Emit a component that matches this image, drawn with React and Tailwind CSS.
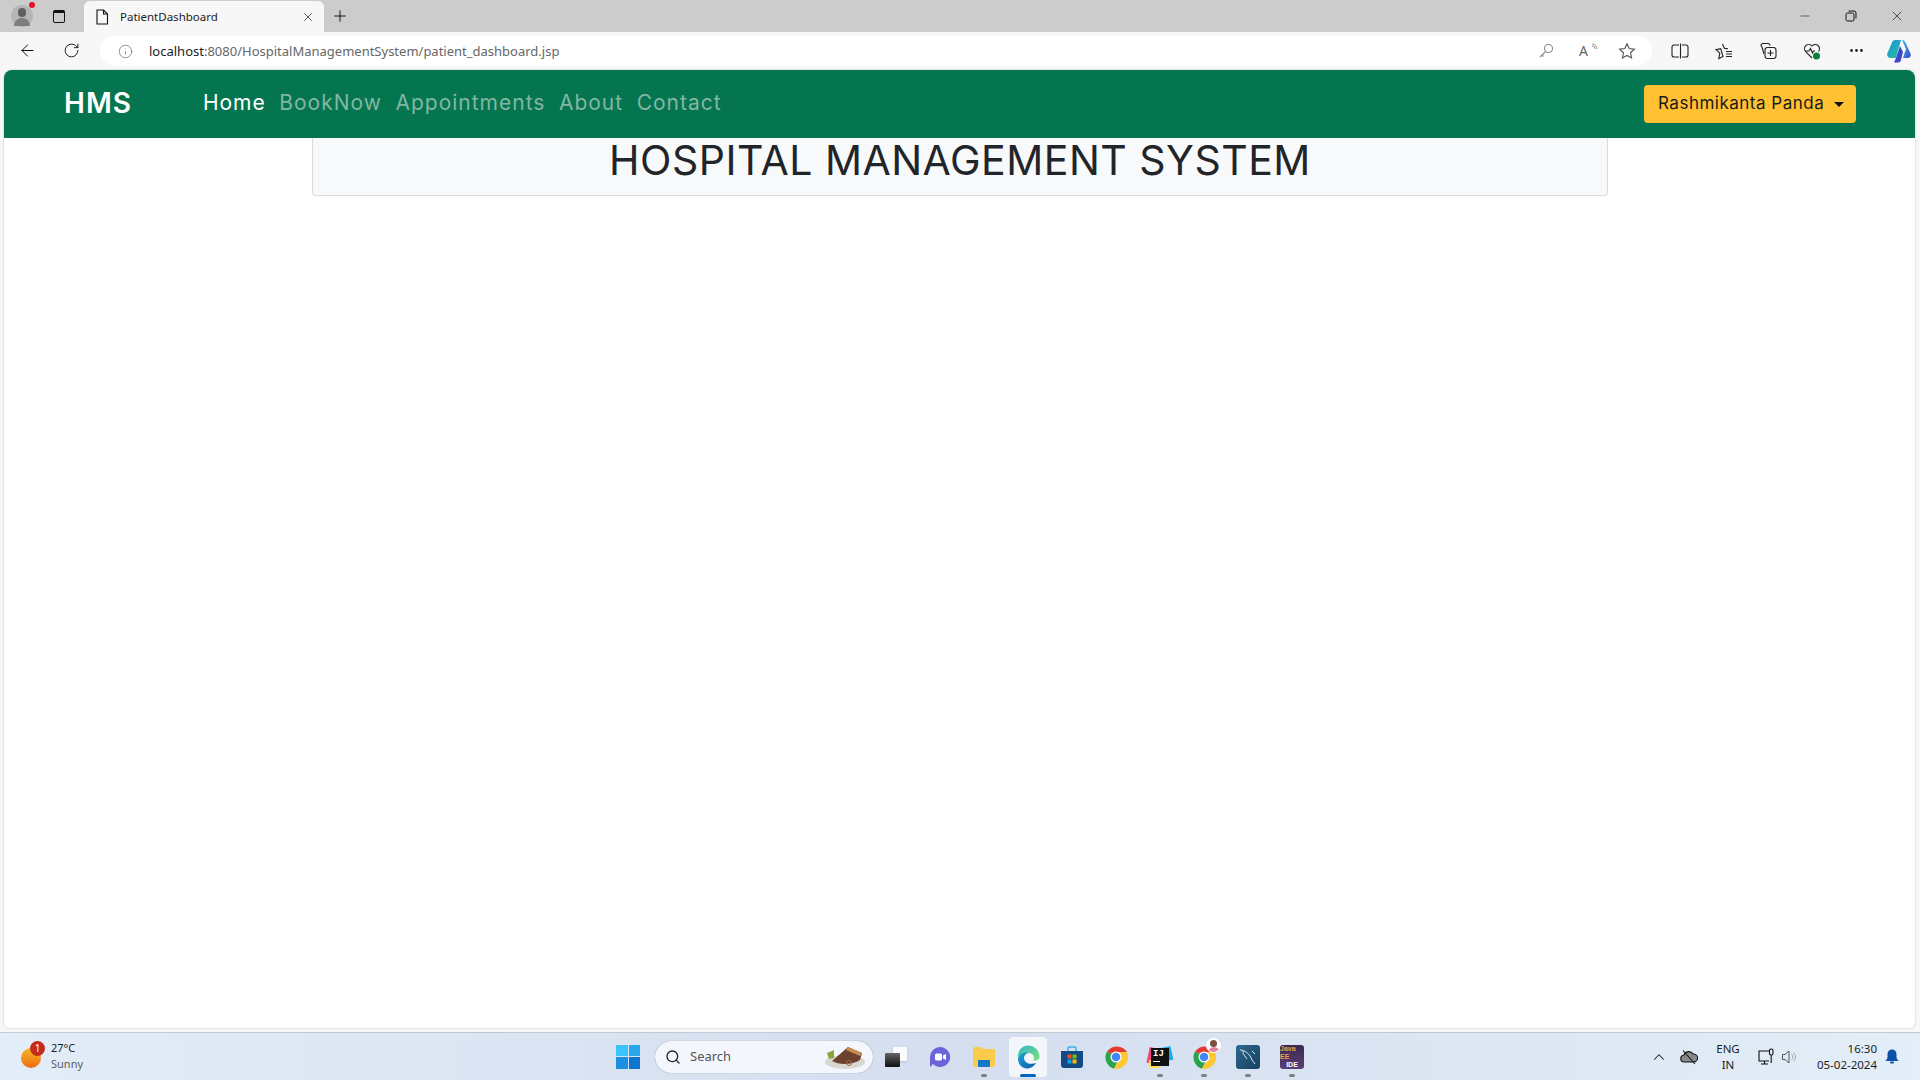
import { ArrowLeft, RotateCw, Info, Plus, X, Minus, Search, ChevronUp, MoreHorizontal } from 'lucide-react'

function ChromeLogo() {
  return (
    <svg width="24" height="24" viewBox="0 0 24 24">
      <path d="M12 12 L3 6.5 A12 12 0 0 1 23 7 L12 7 Z" fill="#e33b2e" />
      <path d="M12 12 L3 6.5 A12 12 0 0 0 10 23.8 L15 14 Z" fill="#2ba24c" />
      <path d="M12 7 L23 7 A12 12 0 0 1 10 23.8 L15 14 Z" fill="#fcc934" />
      <circle cx="12" cy="12" r="5.5" fill="white" />
      <circle cx="12" cy="12" r="4.3" fill="#4285f4" />
    </svg>
  )
}

function EdgeLogo() {
  return (
    <svg width="24" height="24" viewBox="0 0 24 24">
      <defs>
        <linearGradient id="edgeA" x1="0" y1="0" x2="1" y2="1">
          <stop offset="0" stopColor="#1fa2d8" />
          <stop offset="1" stopColor="#0b5ea8" />
        </linearGradient>
        <linearGradient id="edgeB" x1="0" y1="0" x2="1" y2="1">
          <stop offset="0" stopColor="#2fb8c8" />
          <stop offset="1" stopColor="#7fe07a" />
        </linearGradient>
      </defs>
      <path d="M12 0.5 A11.5 11.5 0 0 1 23.5 12 C23.5 15 20 16 17 15.5 C19 13 18 8 12 8 C7 8 4 11 2 14 C1 7 5 0.5 12 0.5 Z" fill="url(#edgeB)" />
      <path d="M2 14 C4 8 9 6.5 12.5 8 C8 9 7 13 9 16 C11 19 16 19.5 20 18 C17.5 22 14 23.5 11 23.5 C6 23.5 2 19 2 14 Z" fill="url(#edgeA)" />
    </svg>
  )
}

function Copilot() {
  return (
    <svg width="26" height="26" viewBox="0 0 26 26">
      <defs>
        <linearGradient id="copA" x1="0" y1="0" x2="1" y2="1">
          <stop offset="0" stopColor="#1c8fe0" />
          <stop offset="1" stopColor="#27c59a" />
        </linearGradient>
        <linearGradient id="copB" x1="0" y1="0" x2="1" y2="1">
          <stop offset="0" stopColor="#3fb4f2" />
          <stop offset="1" stopColor="#3d49c8" />
        </linearGradient>
      </defs>
      <path d="M9 2 H15 L10 20 H5 C2 20 0.5 17.5 1.5 15 L6 4.5 C6.6 3 7.6 2 9 2 Z" fill="url(#copA)" />
      <path d="M16 2 C18 2 19 3.4 19.6 5 L24.5 15.5 C25.6 18 24 20 21 20 H17 L20 11 Z" fill="url(#copB)" />
      <path d="M10 20 L14 8 L17 14 L15 22 C14.5 24 13 24.5 11.5 24.5 H8 Z" fill="#3d49c8" />
    </svg>
  )
}

function TaskIcon({ children, dot, active }) {
  return (
    <div className={`relative h-[40px] flex items-center justify-center rounded-[4px] ${active ? 'w-[38px] mx-[3px] bg-white/70' : 'w-[44px]'}`}>
      {children}
      {dot && <span className={`absolute bottom-[0px] left-1/2 -translate-x-1/2 h-[3px] rounded-full ${active ? 'w-[16px] bg-[#0067c0]' : 'w-[6px] bg-[#7f7f7f]'}`} />}
    </div>
  )
}

function Weather() {
  return (
    <div className="flex items-center w-[600px] pl-[21px]">
      <div className="relative w-[20px] h-[20px] rounded-full bg-gradient-to-b from-[#f5b622] to-[#ee6a14] mt-[2px]">
        <span className="absolute left-[9px] -top-[7px] w-[15px] h-[15px] rounded-full bg-[#c42b1c] text-white text-[10px] leading-[15px] text-center">1</span>
      </div>
      <div className="ml-[10px] text-[11px] leading-[16px] -mt-[2px]">
        <div className="text-[#1b1b1b]">27°C</div>
        <div className="text-[#5d5d5d]">Sunny</div>
      </div>
    </div>
  )
}

export default function App() {
  return (
    <div className="w-[1920px] h-[1080px] flex flex-col overflow-hidden bg-[#f7f7f7] font-['Noto_Sans',sans-serif]">
      {/* tab strip */}
      <div className="h-[32px] bg-[#cccccc] flex items-end shrink-0">
        <div className="w-[84px] h-[32px] flex items-center pl-[11px] gap-[20px]">
          <div className="relative w-[22px] h-[22px] rounded-full bg-[#b5b5b5] overflow-visible">
            <span className="absolute left-[7px] top-[3px] w-[8px] h-[9px] rounded-full bg-[#5f5f5f]" />
            <span className="absolute left-[3px] top-[13px] w-[16px] h-[8px] rounded-t-full bg-[#7d7d7d]" />
            <span className="absolute right-[-2px] top-[-3px] w-[6px] h-[6px] rounded-full bg-[#e81123]" />
          </div>
          <div className="w-[12px] h-[13px] rounded-[2px] border-[1.5px] border-[#111] border-t-[3px]" />
        </div>
        <div className="w-[240px] h-[31px] bg-[#f7f7f7] rounded-t-[6px] flex items-center pl-[11px] pr-[9px] text-[11.5px] text-[#222]">
          <svg width="14" height="16" viewBox="0 0 14 16" fill="none" stroke="#111" strokeWidth="1.1">
            <path d="M2 1 H8.5 L12.5 5 V15 H2 Z" />
            <path d="M8.5 1 V5 H12.5" />
          </svg>
          <span className="ml-[11px] flex-1">PatientDashboard</span>
          <X size={14} strokeWidth={1.3} />
        </div>
        <div className="w-[30px] h-[32px] flex items-center justify-center ml-[1px]"><Plus size={18} strokeWidth={1.2} /></div>
        <div className="flex-1" />
        <div className="flex h-[32px] items-center text-[#111]">
          <div className="w-[46px] flex justify-center"><Minus size={14} strokeWidth={1} /></div>
          <div className="w-[46px] flex justify-center">
            <svg width="12" height="12" viewBox="0 0 12 12" fill="none" stroke="#111" strokeWidth="1">
              <rect x="1" y="3" width="8" height="8" rx="1.5" />
              <path d="M3.5 1 H9 A2 2 0 0 1 11 3 V8.5" />
            </svg>
          </div>
          <div className="w-[46px] flex justify-center"><X size={16} strokeWidth={1} /></div>
        </div>
      </div>
      {/* toolbar */}
      <div className="h-[37px] flex items-center shrink-0">
        <div className="w-[44px] flex justify-center ml-[5px]"><ArrowLeft size={19} strokeWidth={1.2} /></div>
        <div className="w-[44px] flex justify-center"><RotateCw size={17} strokeWidth={1.2} /></div>
        <div className="w-[1552px] ml-[7px] h-[30px] mt-[1px] bg-white rounded-full flex items-center pl-[18px]">
          <Info size={15} strokeWidth={1.1} className="text-[#666]" />
          <span className="ml-[16px] text-[13px] text-[#222] mt-[1px]">localhost<span className="text-[#666]">:8080/HospitalManagementSystem/patient_dashboard.jsp</span></span>
          <div className="flex-1" />
          <svg width="16" height="16" viewBox="0 0 16 16" fill="none" stroke="#8a8a8a" strokeWidth="1.1">
            <circle cx="10.5" cy="5.5" r="4" />
            <path d="M7.5 8.5 L2 14 M4 12 L5.5 13.5" />
          </svg>
          <div className="ml-[25px] flex items-start w-[16px] text-[#666] relative">
            <span className="text-[14px] leading-[16px]">A</span>
            <svg className="absolute -right-[4px] top-0" width="8" height="8" viewBox="0 0 8 8" fill="none" stroke="#777" strokeWidth="0.8">
              <path d="M1 1 A5 5 0 0 1 6 6 M1 3 A3 3 0 0 1 4 6" />
            </svg>
          </div>
          <svg className="ml-[23px] mr-[16px]" width="18" height="18" viewBox="0 0 18 18" fill="none" stroke="#555" strokeWidth="1.1">
            <path d="M9 1.8 L11.2 6.6 L16.4 7.2 L12.5 10.8 L13.6 16 L9 13.4 L4.4 16 L5.5 10.8 L1.6 7.2 L6.8 6.6 Z" />
          </svg>
        </div>
        <div className="flex items-center text-[#222] ml-[6px]">
          <div className="w-[44px] flex justify-center">
            <svg width="18" height="16" viewBox="0 0 18 16" fill="none" stroke="#222" strokeWidth="1.1">
              <path d="M8 2 H3 A2 2 0 0 0 1 4 V12 A2 2 0 0 0 3 14 H8 M11 2 H15 A2 2 0 0 1 17 4 V12 A2 2 0 0 1 15 14 H11 M9.5 0.5 V15.5" />
            </svg>
          </div>
          <div className="w-[44px] flex justify-center">
            <svg width="18" height="18" viewBox="0 0 18 18" fill="none" stroke="#222" strokeWidth="1.1">
              <path d="M7.5 2 L9.5 6.4 L13 6.8 M8 14.5 L3.8 16.5 L4.8 11.2 L1 7.6 L5.7 6.6 Z" />
              <path d="M11 9.5 H17 M11 12 H17 M11 14.5 H17" />
            </svg>
          </div>
          <div className="w-[44px] flex justify-center">
            <svg width="18" height="18" viewBox="0 0 18 18" fill="none" stroke="#222" strokeWidth="1.1">
              <path d="M3 5 L2 3.5 A2 2 0 0 1 4 1.5 H9 A2 2 0 0 1 11 3.5 M3 5 L5 12" />
              <rect x="6" y="5.5" width="11" height="11" rx="2.5" />
              <path d="M11.5 8 V14 M8.5 11 H14.5" />
            </svg>
          </div>
          <div className="w-[44px] flex justify-center">
            <svg width="18" height="18" viewBox="0 0 18 18" fill="none" stroke="#222" strokeWidth="1.1">
              <path d="M9 16 L2.5 9.5 A4 4 0 0 1 9 4 A4 4 0 0 1 15.5 9.5" />
              <path d="M2 9 H6 L7.5 6.5 L9.5 11 L10.5 9 H12" />
              <circle cx="13.5" cy="14" r="3.5" fill="#107c41" stroke="none" />
            </svg>
          </div>
          <div className="w-[44px] flex justify-center"><MoreHorizontal size={17} /></div>
          <div className="w-[42px] flex justify-center"><Copilot /></div>
        </div>
      </div>
      {/* page */}
      <div className="flex-1 pl-[4px] pr-[5px] pt-[1px] pb-[4px] min-h-0">
        <div className="h-full bg-white rounded-t-[8px] rounded-b-[6px] shadow-[0_0_2px_rgba(0,0,0,0.25)] overflow-hidden font-['Inter',sans-serif]">
          <nav className="h-[68px] bg-[#04754f] flex items-center pl-[60px] pr-[59px]">
            <span className="text-white text-[28px] font-semibold tracking-[1px] mr-[71px] -mt-[2px]">HMS</span>
            <div className="flex gap-[13.5px] text-[21px] tracking-[1px] -mt-[2px]">
              <span className="text-white">Home</span>
              <span className="text-[#82b7a3]">BookNow</span>
              <span className="text-[#82b7a3]">Appointments</span>
              <span className="text-[#82b7a3]">About</span>
              <span className="text-[#82b7a3]">Contact</span>
            </div>
            <div className="flex-1" />
            <button className="h-[38px] w-[212px] bg-[#ffc131] rounded-[4px] text-[#1a1a1a] text-[17px] tracking-[0.5px] flex items-center pl-[14px]">
              Rashmikanta Panda
              <span className="ml-[10px] w-0 h-0 border-x-[5px] border-x-transparent border-t-[5px] border-t-[#111]" />
            </button>
          </nav>
          <div className="w-[1296px] h-[58px] ml-[308px] bg-[#f8f9fa] border border-t-0 border-[#d9dadc] rounded-b-[4px] text-center text-[41px] leading-[45px] tracking-[0.5px] text-[#212529]">
            HOSPITAL MANAGEMENT SYSTEM
          </div>
        </div>
      </div>
      {/* taskbar */}
      <div className="h-[48px] shrink-0 flex items-center border-t border-[#c3c9d3] bg-gradient-to-r from-[#e2edf8] via-[#d4deef] to-[#e3eef8]">
        <Weather />
        <div className="flex items-center">
          <div className="w-[24px] h-[24px] ml-[16px] grid grid-cols-2 gap-[1px]">
            <span className="bg-[#3cc3f7]" /><span className="bg-[#2aa6ec]" /><span className="bg-[#1d8fe0]" /><span className="bg-[#0f75cf]" />
          </div>
          <div className="ml-[15px] w-[218px] h-[32px] rounded-full bg-[#f3f6fd] shadow-[0_0_1px_rgba(0,0,0,0.5)] flex items-center pl-[10px] text-[13px] text-[#555]">
            <Search size={16} className="text-[#222]" />
            <span className="ml-[9px]">Search</span>
            <svg className="ml-auto mr-[7px]" width="42" height="26" viewBox="0 0 42 26">
              <ellipse cx="21" cy="18" rx="20" ry="7" fill="#d8d8d0" />
              <path d="M8 17 L24 3 L38 9 L36 16 C28 21 15 21 8 17 Z" fill="#6b4230" />
              <path d="M24 3 L38 9 L36 12 L22 6 Z" fill="#c98d52" />
              <path d="M3 9 L10 6 L10 14 L5 15 Z" fill="#86a83a" />
              <circle cx="25" cy="19" r="2.5" fill="none" stroke="#a8672f" strokeWidth="1" />
            </svg>
          </div>
          <div className="flex ml-[1px]">
            <TaskIcon>
              <div className="relative w-[22px] h-[20px]">
                <span className="absolute right-0 top-0 w-[14px] h-[14px] bg-white/90 rounded-[1px] shadow-sm" />
                <span className="absolute left-0 bottom-0 w-[15px] h-[14px] bg-gradient-to-b from-[#666] to-[#111] rounded-[1px]" />
              </div>
            </TaskIcon>
            <TaskIcon>
              <svg width="24" height="24" viewBox="0 0 24 24">
                <path d="M12 2 A10 10 0 1 1 5 19 L2 22 V12 A10 10 0 0 1 12 2 Z" fill="#6b63d8" />
                <rect x="7" y="8.5" width="7" height="7" rx="1.5" fill="white" />
                <path d="M15 10.5 L18 9 V15 L15 13.5 Z" fill="white" />
              </svg>
            </TaskIcon>
            <TaskIcon dot>
              <svg width="24" height="22" viewBox="0 0 24 22">
                <path d="M1 3 A2 2 0 0 1 3 1 H9 L11 3 H23 V19 A2 2 0 0 1 21 21 H3 A2 2 0 0 1 1 19 Z" fill="#fbcc4c" />
                <rect x="6" y="14" width="12" height="7" rx="1" fill="#0f78c8" />
              </svg>
            </TaskIcon>
            <TaskIcon dot active><EdgeLogo /></TaskIcon>
            <TaskIcon>
              <svg width="24" height="24" viewBox="0 0 24 24">
                <path d="M8 6 V3 A1 1 0 0 1 9 2 H15 A1 1 0 0 1 16 3 V6" fill="none" stroke="#3fb0e8" strokeWidth="1.5" />
                <path d="M1 6 H23 V20 A3 3 0 0 1 20 23 H4 A3 3 0 0 1 1 20 Z" fill="#134a84" />
                <rect x="7.5" y="9.5" width="4" height="4" fill="#f25022" />
                <rect x="12.5" y="9.5" width="4" height="4" fill="#7fba00" />
                <rect x="7.5" y="14.5" width="4" height="4" fill="#00a4ef" />
                <rect x="12.5" y="14.5" width="4" height="4" fill="#ffb900" />
              </svg>
            </TaskIcon>
            <TaskIcon><ChromeLogo /></TaskIcon>
            <TaskIcon dot>
              <div className="relative w-[24px] h-[24px]">
                <span className="absolute left-0 top-[3px] w-[12px] h-[16px] bg-[#f0427f] rotate-12" />
                <span className="absolute right-0 top-[2px] w-[12px] h-[14px] bg-[#18a8e8] -rotate-12" />
                <span className="absolute left-[1px] bottom-[1px] w-[10px] h-[8px] bg-[#fce14d]" />
                <div className="absolute left-[3px] top-[3px] w-[18px] h-[18px] bg-[#111] text-white text-[9px] leading-[12px] font-bold pl-[2px] font-['Liberation_Mono',monospace]">
                  IJ
                  <span className="block w-[7px] h-[1.5px] bg-white mt-[1px]" />
                </div>
              </div>
            </TaskIcon>
            <TaskIcon dot>
              <ChromeLogo />
              <span className="absolute right-[5px] top-[1px] w-[15px] h-[15px] rounded-full bg-white border border-white overflow-hidden">
                <span className="block w-[7px] h-[7px] rounded-full bg-[#7a5240] mx-auto mt-[1px]" />
                <span className="block w-[12px] h-[6px] rounded-t-full bg-[#e0809a] mx-auto" />
              </span>
            </TaskIcon>
            <TaskIcon dot>
              <div className="w-[24px] h-[24px] bg-gradient-to-br from-[#2d6a8e] to-[#173f5f] rounded-[3px] flex items-center justify-center">
                <svg width="20" height="20" viewBox="0 0 20 20" fill="none" stroke="#d8e4ec" strokeWidth="1">
                  <path d="M2 3 C7 3 12 7 14 13 L17 17 M5 4 C5 8 7 9 9 12 M14 4 L17 7" />
                </svg>
              </div>
            </TaskIcon>
            <TaskIcon dot>
              <div className="w-[24px] h-[24px] bg-gradient-to-b from-[#3b2a4e] to-[#5b3d78] rounded-[3px] flex flex-col items-center justify-center text-[7px] leading-[8px] font-bold text-[#e8a04a] font-['Liberation_Sans',sans-serif]">
                <span>Java EE</span>
                <span className="text-white">IDE</span>
              </div>
            </TaskIcon>
          </div>
        </div>
        <div className="flex-1" />
        <div className="flex items-center text-[#1b1b1b] text-[11.5px] pr-[21px]">
          <ChevronUp size={18} strokeWidth={1.4} />
          <svg className="ml-[12px]" width="18" height="16" viewBox="0 0 18 16" fill="#8a8a8a" stroke="#111" strokeWidth="1.1">
            <path d="M4.5 13 A3.5 3.5 0 0 1 4 6 A5 5 0 0 1 13 5 A4 4 0 0 1 14 13 Z" />
            <path d="M3 1.5 L15 15" />
          </svg>
          <div className="ml-[14px] w-[32px] text-center leading-[16px]"><div>ENG</div><div>IN</div></div>
          <svg className="ml-[13px]" width="18" height="18" viewBox="0 0 18 18" fill="none" stroke="#111" strokeWidth="1.1">
            <path d="M12 3 H2 V13 H12 M4 16 H11 M7.5 13 V16" />
            <rect x="12.5" y="1" width="3.5" height="6" rx="1.5" />
            <path d="M14.2 7 V15" />
          </svg>
          <svg className="ml-[6px]" width="18" height="16" viewBox="0 0 18 16" fill="none" stroke="#555" strokeWidth="1">
            <path d="M1.5 5.5 H4 L8 2 V14 L4 10.5 H1.5 Z" />
            <path d="M10.5 5 A4 4 0 0 1 10.5 11 M12.5 3.5 A6 6 0 0 1 12.5 12.5" stroke="#aaa" />
          </svg>
          <div className="ml-[12px] w-[66px] text-right leading-[16px]"><div>16:30</div><div>05-02-2024</div></div>
          <svg className="ml-[8px]" width="14" height="15" viewBox="0 0 14 15" fill="#0b4fa8">
            <path d="M7 0.5 A4.5 4.5 0 0 1 11.5 5 V9 L13.5 12 H0.5 L2.5 9 V5 A4.5 4.5 0 0 1 7 0.5 Z" />
            <rect x="5" y="12.5" width="4" height="2" rx="1" />
          </svg>
        </div>
      </div>
    </div>
  )
}
